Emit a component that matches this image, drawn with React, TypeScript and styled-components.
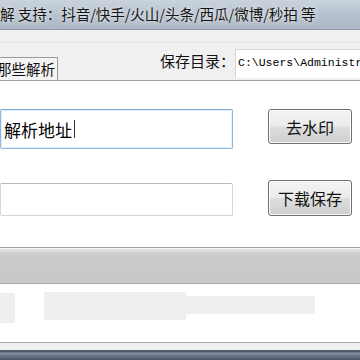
import React from "react";
import styled, { createGlobalStyle } from "styled-components";

const Global = createGlobalStyle`
  html, body { margin: 0; padding: 0; background: #ffffff; overflow: hidden; }
  * { box-sizing: border-box; }
`;

const CJK = `"Noto Sans CJK SC", "Microsoft YaHei", sans-serif`;

const Window = styled.div`
  width: 360px;
  height: 360px;
  display: flex;
  flex-direction: column;
  overflow: hidden;
  font-family: ${CJK};
  background: #ffffff;
`;

const TitleBar = styled.div`
  height: 30px;
  flex: none;
  display: flex;
  align-items: center;
  background: linear-gradient(180deg, #c9d3de 0%, #b9c3cf 45%, #aeb8c5 100%);
  border-bottom: 1px solid #8e99a8;
`;

const TitleText = styled.span`
  font-size: 14.6px;
  line-height: 1;
  color: #141414;
  white-space: nowrap;
  text-shadow: 0 0 6px rgba(255, 255, 255, 0.75), 0 0 2px rgba(255, 255, 255, 0.6);
  letter-spacing: -0.1px;
`;

const ToolArea = styled.div`
  flex: none;
  height: 51px;
  background: #f0f0f0;
  display: flex;
  flex-direction: column;
  border-bottom: 1px solid #a0a0a0;
`;

const MenuStrip = styled.div`
  height: 13px;
  flex: none;
  border-bottom: 1px solid #dfe6ee;
`;

const ToolRow = styled.div`
  flex: 1;
  display: flex;
  align-items: flex-end;
`;

const TabButton = styled.div`
  width: 58px;
  height: 23px;
  border: 1px solid #9a9a9a;
  border-left: none;
  border-bottom: none;
  background: #f4f4f4;
  font-size: 14.5px;
  line-height: 1;
  color: #111;
  white-space: nowrap;
  display: flex;
  align-items: center;
  justify-content: flex-end;
  padding-right: 2px;
  padding-top: 1px;
`;

const DirLabel = styled.span`
  margin-left: 102px;
  align-self: flex-start;
  margin-top: 10px;
  font-size: 15px;
  line-height: 1;
  color: #111;
  white-space: nowrap;
`;

const PathBox = styled.div`
  align-self: flex-start;
  margin-top: 6px;
  flex: 1;
  min-width: 0;
  height: 29px;
  background: #ffffff;
  border-top: 1px solid #d8d8d8;
  border-left: 1px solid #d8d8d8;
  font-family: "Liberation Mono", "DejaVu Sans Mono", monospace;
  font-size: 11.5px;
  color: #000;
  line-height: 26px;
  padding-left: 2px;
  white-space: nowrap;
  overflow: hidden;
`;

const Main = styled.div`
  flex: none;
  height: 166px;
  display: grid;
  grid-template-columns: 233px 84px;
  column-gap: 35px;
  grid-template-rows: 40px 36px;
  row-gap: 31px;
  padding-top: 28px;
  background: #ffffff;
`;

const Field = styled.div<{ $focused?: boolean; $h: number; $align: string }>`
  height: ${(p) => p.$h}px;
  align-self: ${(p) => p.$align};
  border: 1px solid ${(p) => (p.$focused ? "#8fb6dc" : "#d6d6d6")};
  border-top-color: ${(p) => (p.$focused ? "#7ea7d2" : "#b8b8b8")};
  border-radius: 2px;
  box-shadow: ${(p) => (p.$focused ? "inset 0 0 0 1px #e4eefa" : "none")};
  background: #fff;
  display: flex;
  align-items: center;
  padding-left: 3px;
  font-size: 17px;
  color: #000;
  white-space: nowrap;
`;

const Caret = styled.span`
  display: inline-block;
  width: 1px;
  height: 18px;
  background: #333;
  margin-left: 2px;
`;

const Button = styled.div<{ $h: number; $align: string }>`
  height: ${(p) => p.$h}px;
  align-self: ${(p) => p.$align};
  border: 1px solid #707070;
  border-radius: 3px;
  background: linear-gradient(180deg, #f3f3f3 0%, #ebebeb 48%, #dddddd 52%, #cfcfcf 100%);
  box-shadow: inset 0 0 0 1px #fcfcfc;
  display: flex;
  align-items: center;
  justify-content: center;
  font-size: 16px;
  color: #111;
  white-space: nowrap;
`;

const Band = styled.div`
  flex: none;
  height: 37px;
  border-top: 1px solid #a2a2a2;
  border-bottom: 1px solid #a9a9a9;
  background: linear-gradient(180deg, #e6e6e6 0px, #dcdcdc 3px, #cbcbcb 6px, #c8c8c8 100%);
  box-shadow: inset 0 1px 0 #f4f4f4;
`;

const Panel = styled.div`
  flex: none;
  height: 58px;
  background: #ffffff;
  border-top: 1px solid #ffffff;
  display: flex;
  align-items: flex-start;
  padding-top: 7px;
`;

const Block = styled.div<{ $w: number; $h: number; $mt: number; $ml: number }>`
  width: ${(p) => p.$w}px;
  height: ${(p) => p.$h}px;
  margin-top: ${(p) => p.$mt}px;
  margin-left: ${(p) => p.$ml}px;
  background: #efefef;
  flex: none;
`;

const Footer = styled.div`
  flex: 1;
  border-top: 1px solid #a6a6a6;
  background: #f0f0f0;
  display: flex;
  flex-direction: column;
  justify-content: flex-end;
`;

const FrameEdge = styled.div`
  height: 10px;
  background: linear-gradient(180deg, #56606f 0px, #4a5466 2px, #8d98a8 3px, #6f7a8c 5px, #4b5566 100%);
`;

export default function App() {
  return (
    <>
      <Global />
      <Window>
        <TitleBar>
          <TitleText>解 支持：抖音/快手/火山/头条/西瓜/微博/秒拍 等</TitleText>
        </TitleBar>
        <ToolArea>
          <MenuStrip />
          <ToolRow>
            <TabButton>那些解析</TabButton>
            <DirLabel>保存目录：</DirLabel>
            <PathBox>C:\Users\Administr</PathBox>
          </ToolRow>
        </ToolArea>
        <Main>
          <Field $focused $h={40} $align="start">
            解析地址
            <Caret />
          </Field>
          <Button $h={35} $align="start">去水印</Button>
          <Field $h={33} $align="end">{""}</Field>
          <Button $h={36} $align="end">下载保存</Button>
        </Main>
        <Band />
        <Panel>
          <Block $w={15} $h={30} $mt={1} $ml={0} />
          <Block $w={142} $h={28} $mt={0} $ml={29} />
          <Block $w={129} $h={18} $mt={4} $ml={0} />
        </Panel>
        <Footer>
          <FrameEdge />
        </Footer>
      </Window>
    </>
  );
}
